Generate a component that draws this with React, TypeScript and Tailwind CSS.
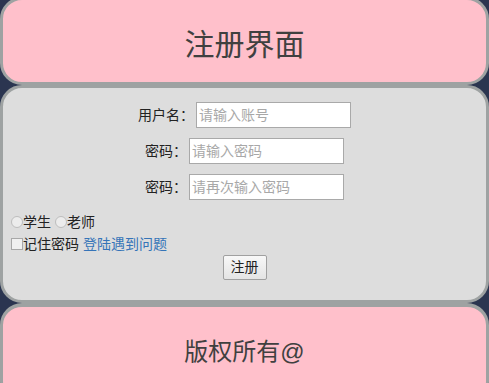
import React from 'react';

const font = "font-['Liberation_Sans','Noto_Sans_CJK_SC',sans-serif]";

function FieldRow({ label, placeholder, type = 'text' }: { label: string; placeholder: string; type?: string }) {
  return (
    <div className="flex h-[26px] items-center justify-center">
      <span className="pr-[2px] text-[14px] text-[#222]">{label}</span>
      <input
        type={type}
        placeholder={placeholder}
        className="h-[26px] w-[155px] border border-[#a9a9a9] bg-white px-[2px] text-[14px] text-[#222] outline-none placeholder:text-[#a8a8a8]"
      />
    </div>
  );
}

export default function App() {
  return (
    <div className={`h-[383px] overflow-hidden bg-[#2b3550] ${font}`}>
      {/* Header */}
      <header className="-mt-[3px] flex h-[88px] justify-center rounded-[22px] border-[3px] border-[#9ea2a2] bg-[#ffc0cb] pt-[27px]">
        <h1 className="text-[30px] leading-[36px] font-normal text-[#404040]">注册界面</h1>
      </header>

      {/* Form */}
      <main className="flex h-[218px] flex-col rounded-[22px] border-[3px] border-[#9ea2a2] bg-[#dddddd] px-[8px] pt-[14px]">
        <div className="flex flex-col gap-[10px]">
          <FieldRow label="用户名：" placeholder="请输入账号" />
          <FieldRow label="密码：" placeholder="请输入密码" type="password" />
          <FieldRow label="密码：" placeholder="请再次输入密码" type="password" />
        </div>

        <div className="mt-[11px] flex h-[22px] items-center text-[14px] text-[#222]">
          <label className="flex items-center">
            <input
              type="radio"
              name="role"
              className="h-[12px] w-[12px] appearance-none rounded-full border border-[#bdbdbd] bg-[#ececec]"
            />
            学生
          </label>
          <label className="ml-[4px] flex items-center">
            <input
              type="radio"
              name="role"
              className="h-[12px] w-[12px] appearance-none rounded-full border border-[#bdbdbd] bg-[#ececec]"
            />
            老师
          </label>
        </div>

        <div className="flex h-[22px] items-center text-[14px] text-[#222]">
          <label className="flex items-center">
            <input
              type="checkbox"
              className="h-[12px] w-[12px] appearance-none border border-[#a8a8a8] bg-[#f0f0f0]"
            />
            记住密码
          </label>
          <a href="#" className="ml-[4px] text-[#3574b8]">
            登陆遇到问题
          </a>
        </div>

        <div className="flex justify-center">
          <button className="h-[25px] w-[44px] rounded-[2px] border border-[#a0a0a0] bg-gradient-to-b from-[#f8f8f8] to-[#e4e4e4] text-[14px] text-[#222]">
            注册
          </button>
        </div>
      </main>

      {/* Footer */}
      <footer className="flex h-[100px] justify-center rounded-[22px] border-[3px] border-t-4 border-[#9ea2a2] bg-[#ffc0cb] pt-[31px]">
        <p className="text-[24px] leading-[28px] text-[#404040]">版权所有@</p>
      </footer>
    </div>
  );
}
